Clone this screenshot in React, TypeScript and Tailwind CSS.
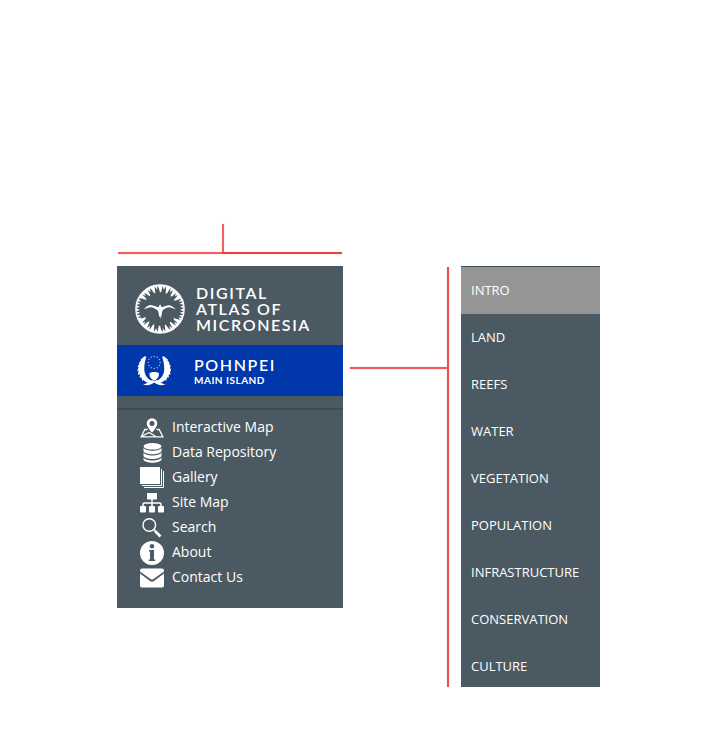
import React from "react";

const longTooth = "M21.800 1h6.400l-1 2.500-1 4.500-1.200.600-1.200-4.600z";
const shortTooth = "M23.300 1h3.400L25.500 5.600z";
const sideTooth = "M23.400 1h3.200L25 4.800z";

const teeth = [
  ...[0, 20, 39, 57, 123, 141, 160, 180, 200, 219, 237, 303, 321, 340].map((angle) => ({ angle, d: longTooth })),
  ...[10, 30, 48, 132, 150, 170, 190, 210, 228, 312, 330, 350].map((angle) => ({ angle, d: shortTooth })),
  ...[68, 76, 84, 92, 100, 108, 115, 245, 252, 260, 268, 276, 284, 292].map((angle) => ({ angle, d: sideTooth })),
];

function AtlasLogo() {
  return (
    <svg viewBox="0 0 50 50" className="size-[50px] shrink-0" fill="white" aria-hidden="true">
      <circle cx="25" cy="25" r="24.2" fill="none" stroke="white" strokeWidth="1.2" />
      {teeth.map(({ angle, d }) => (
        <path key={angle} d={d} transform={`rotate(${angle} 25 25)`} />
      ))}
      <path d="M8.700 25.500c1.800-2.500 4-4 6.800-4.600 3 .3 5.500 1.600 8.300 2.300l.6-2.200 1.200-.300.800 2.500c2.800-.5 5.200-1.900 7.600-2 2.800.6 5 2.100 6.900 4.300-2.300-1.300-4.700-2.300-7.300-2.300-2.400.5-4.400 1.500-6 3.200-.6 1.600-1 3.300-1.100 5l-.7 3.600-.8-3.600-1 2.200c.1-2.600-.2-5-1.300-7-1.900-1.700-4-2.900-6.400-3.400-2.700.2-5.200 1-7.600 2.300z" />
    </svg>
  );
}

function IslandSeal() {
  const stars = Array.from({ length: 12 }, (_, i) => (i * Math.PI) / 6);
  const leaves = "M8.500 2.500 4 6M6.500 4 2.500 9.500M4.500 7 1.200 13M3.500 10.500.800 17M3 15l-1.500 5.500M4 19l-.8 4.500M6 22.500l-.500 4";
  const wreath = "M9.500 2.500C6 4.500 2.500 9 2 14.500c-.5 6.500 2.500 12 9.500 14.500l3-2.200C10 24.500 7.500 20.500 7.300 15.500 7.200 10.500 8 6.500 9.500 2.500z";
  return (
    <svg viewBox="0 0 34 34" className="size-[34px] shrink-0" fill="white" aria-hidden="true">
      <path d={wreath} />
      <path d={leaves} stroke="white" strokeWidth="1.3" />
      <g transform="translate(34.500 0) scale(-1 1)">
        <path d={wreath} />
        <path d={leaves} stroke="white" strokeWidth="1.3" />
      </g>
      {stars.map((t) => (
        <circle key={t} cx={17.2 + 6 * Math.sin(t)} cy={8.5 - 6 * Math.cos(t)} r=".7" opacity=".7" />
      ))}
      <path d="M12.500 19c1-.700 2.500-1.100 4.700-1.100s3.700.400 4.700 1.100c.5 3.500-1.300 6-4.700 7.700-3.400-1.700-5.200-4.200-4.700-7.700z" />
      <path d="M6 30.500c3.500-.700 6-2.500 9-4.500l2.200 1.200L19.500 26c3 2 5.500 3.800 9 4.500-4 1.200-7.500.800-11.300-2C13.500 31.300 10 31.700 6 30.500z" />
    </svg>
  );
}

const icon = "size-6 shrink-0";

function MapIcon() {
  return (
    <svg viewBox="0 0 24 24" className={icon} aria-hidden="true">
      <path d="M7.500 13.500H4.800L1.200 20.800h21.600l-3.600-7.300h-2.700M2.500 20 9 16.500l6.500 3.800" fill="none" stroke="white" strokeWidth="1.300" />
      <path fillRule="evenodd" fill="white" d="M12 2.200a5.300 5.300 0 0 0-5.300 5.300c0 3.800 5.300 9 5.300 9s5.300-5.200 5.300-9A5.300 5.300 0 0 0 12 2.200zm0 2.800a2.500 2.500 0 1 1 0 5 2.500 2.500 0 0 1 0-5z" />
    </svg>
  );
}

function DatabaseIcon() {
  return (
    <svg viewBox="0 0 24 24" className={icon} fill="white" aria-hidden="true">
      <ellipse cx="12.500" cy="5.300" rx="9" ry="3.300" />
      <path d="M3.500 6.800c1 2 4.800 3 9 3s8-1 9-3v3.400c-1 2-4.800 3-9 3s-8-1-9-3z" />
      <path d="M3.500 11.600c1 2 4.800 3 9 3s8-1 9-3V15c-1 2-4.800 3-9 3s-8-1-9-3z" />
      <path d="M3.500 16.400c1 2 4.800 3 9 3s8-1 9-3v2.300c-1 2-4.800 3-9 3s-8-1-9-3z" />
    </svg>
  );
}

function GalleryIcon() {
  return (
    <svg viewBox="0 0 24 24" className={icon} aria-hidden="true">
      <path d="M0 1h20v17H0z" fill="white" />
      <path d="M2 19.500h19.500V3M4 21.500h19.500V5" fill="none" stroke="white" strokeWidth="1" />
    </svg>
  );
}

function SiteMapIcon() {
  return (
    <svg viewBox="0 0 24 24" className={icon} fill="white" aria-hidden="true">
      <rect x="7" y="2" width="10" height="6.500" rx=".6" />
      <rect x="0" y="15" width="6" height="6.500" rx="1" />
      <rect x="9" y="15" width="6" height="6.500" rx="1" />
      <rect x="18" y="15" width="6" height="6.500" rx="1" />
      <path d="M12 8v8M3 16v-2.500q0-1.500 1.500-1.500h15q1.500 0 1.500 1.500V16" fill="none" stroke="white" strokeWidth="1.500" />
    </svg>
  );
}

function SearchIcon() {
  return (
    <svg viewBox="0 0 24 24" className={icon} fill="none" stroke="white" aria-hidden="true">
      <circle cx="9.300" cy="9" r="6.300" strokeWidth="1.400" />
      <path d="m13.800 13.500 2 2" strokeWidth="1.500" />
      <path d="m15 15 5.500 5.500" strokeWidth="2.600" />
    </svg>
  );
}

function InfoIcon() {
  return (
    <svg viewBox="0 0 24 24" className={icon} aria-hidden="true">
      <circle cx="12" cy="12" r="12" fill="white" />
      <circle cx="12" cy="5.200" r="2.200" fill="#4b5962" />
      <path d="M9 9h5v9.500h1.200V20H8.800v-1.500H10v-8H9z" fill="#4b5962" />
    </svg>
  );
}

function MailIcon() {
  return (
    <svg viewBox="0 0 24 24" className={icon} fill="white" aria-hidden="true">
      <path d="M2 2.500h20q2 0 2 2v1L13.500 13q-1.500 1-3 0L0 5.500v-1q0-2 2-2z" />
      <path d="M0 7.500 10 15q2 1.300 4 0l10-7.500v12q0 2-2 2H2q-2 0-2-2z" />
    </svg>
  );
}

const tools = [
  { label: "Interactive Map", Icon: MapIcon },
  { label: "Data Repository", Icon: DatabaseIcon },
  { label: "Gallery", Icon: GalleryIcon },
  { label: "Site Map", Icon: SiteMapIcon },
  { label: "Search", Icon: SearchIcon },
  { label: "About", Icon: InfoIcon },
  { label: "Contact Us", Icon: MailIcon },
];

const topics = [
  "INTRO",
  "LAND",
  "REEFS",
  "WATER",
  "VEGETATION",
  "POPULATION",
  "INFRASTRUCTURE",
  "CONSERVATION",
  "CULTURE",
];

function SidePanel() {
  return (
    <section className="bg-[#4b5962] pb-[18px]">
      <header className="flex h-[79px] items-center gap-[11px] pt-[7px] pl-[18px] font-['Lato',sans-serif] text-base leading-4 font-semibold tracking-widest">
        <AtlasLogo />
        <h1>
          DIGITAL
          <br />
          ATLAS OF
          <br />
          MICRONESIA
        </h1>
      </header>
      <div className="flex h-[51px] items-center gap-[23px] bg-[#0037ab] pl-5 font-['Lato',sans-serif] font-bold">
        <IslandSeal />
        <div>
          <h2 className="text-base leading-[18px] font-semibold tracking-widest">POHNPEI</h2>
          <p className="text-[10px] leading-3 tracking-wider">MAIN ISLAND</p>
        </div>
      </div>
      <div className="h-[14px] border-b-2 border-[#3f4c54]" />
      <nav aria-label="Tools" className="pt-[5px]">
        <ul>
          {tools.map(({ label, Icon }) => (
            <li key={label}>
              <a href="#" className="flex h-[25px] items-center gap-2 pl-[23px] text-sm">
                <Icon />
                <span className="pb-[2px]">{label}</span>
              </a>
            </li>
          ))}
        </ul>
      </nav>
    </section>
  );
}

function TopicMenu() {
  return (
    <nav aria-label="Topics" className="mt-[42px] w-[139px] border-t border-[#3f4f58] bg-[#4b5962]">
      <ul>
        {topics.map((topic, i) => (
          <li key={topic}>
            <a
              href="#"
              className={`block px-[10px] pt-[13px] text-[13px] leading-5 ${
                i === topics.length - 1 ? "pb-[11px]" : "pb-[14px]"
              } ${i === 0 ? "bg-[#959595]" : ""}`}
            >
              {topic}
            </a>
          </li>
        ))}
      </ul>
    </nav>
  );
}

export default function App() {
  return (
    <main className="min-h-screen bg-white pt-[224px] pb-16 font-['Open_Sans','Noto_Sans',sans-serif] text-white">
      <div className="flex justify-center">
        <div className="w-[226px]">
          <div className="flex h-[42px] flex-col px-px" aria-hidden="true">
            <div className="ml-[104px] h-7 w-[2px] bg-[#f26060] shadow-[0_0_1px_#f58b8b]" />
            <div className="flex h-[2px] shadow-[0_0_1px_#f58b8b]">
              <div className="w-[104px] bg-[#f26060]" />
              <div className="flex-1 bg-[#ee3f3f]" />
            </div>
          </div>
          <SidePanel />
        </div>
        <div className="mt-[43px] flex w-[118px] pr-3 pl-[7px]" aria-hidden="true">
          <div className="mt-[100px] h-[2px] flex-1 bg-[#f05a5a] shadow-[0_0_1px_#f58b8b]" />
          <div className="w-[2px] bg-[#f24a4a] shadow-[0_0_1px_#f58b8b]" />
        </div>
        <TopicMenu />
      </div>
    </main>
  );
}
